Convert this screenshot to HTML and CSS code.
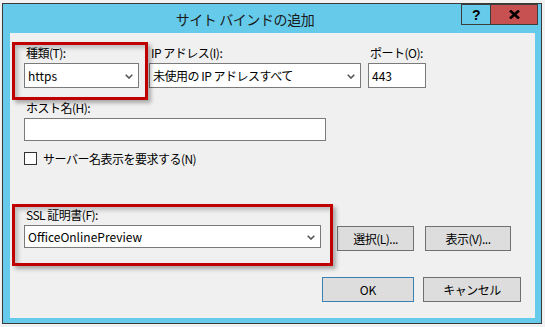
FILE: index.html
```html
<!DOCTYPE html>
<html lang="ja">
<head>
  <meta charset="UTF-8">
  <title>サイト バインドの追加</title>
  <link rel="stylesheet" href="styles.css">
</head>
<body>

  <div class="window">
    <div class="titlebar">
      <div class="title">サイト バインドの追加</div>
      <div class="caption-buttons">
        <div class="cap help">?</div>
        <div class="cap close">
          <svg width="11" height="9" viewBox="0 0 11 9"><path d="M1 0.5 L10 8.5 M10 0.5 L1 8.5" stroke="#000" stroke-width="2.6" fill="none"/></svg>
        </div>
      </div>
    </div>

    <div class="client">
      <!-- binding row -->
      <div class="row binding">
        <div class="field f-type">
          <div class="label">種類(T):</div>
          <div class="combo"><span class="latin">https</span><svg class="chev" width="8" height="5" viewBox="0 0 8 5"><polyline points="0.7,0.7 4,4 7.3,0.7" stroke="#555" stroke-width="1.6" fill="none"/></svg></div>
        </div>
        <div class="field f-ip">
          <div class="label">IP アドレス(I):</div>
          <div class="combo"><span>未使用の IP アドレスすべて</span><svg class="chev" width="8" height="5" viewBox="0 0 8 5"><polyline points="0.7,0.7 4,4 7.3,0.7" stroke="#555" stroke-width="1.6" fill="none"/></svg></div>
        </div>
        <div class="field f-port">
          <div class="label">ポート(O):</div>
          <div class="textbox latin">443</div>
        </div>
      </div>

      <!-- host name -->
      <div class="host">
        <div class="label">ホスト名(H):</div>
        <div class="textbox host-box"></div>
      </div>

      <div class="check-row">
        <span class="checkbox"></span>
        <span>サーバー名表示を要求する(N)</span>
      </div>

      <!-- certificate -->
      <div class="ssl">
        <div class="label">SSL 証明書(F):</div>
        <div class="ssl-row">
          <div class="combo cert"><span class="latin">OfficeOnlinePreview</span><svg class="chev" width="8" height="5" viewBox="0 0 8 5"><polyline points="0.7,0.7 4,4 7.3,0.7" stroke="#555" stroke-width="1.6" fill="none"/></svg></div>
          <div class="btn btn-select">選択(L)...</div>
          <div class="btn btn-view">表示(V)...</div>
        </div>
      </div>

      <div class="dialog-buttons">
        <div class="btn btn-ok latin">OK</div>
        <div class="btn btn-cancel">キャンセル</div>
      </div>

      <!-- red callouts drawn over the dialog -->
      <div class="callout callout-type"></div>
      <div class="callout callout-ssl"></div>
    </div>
  </div>

</body>
</html>
```

FILE: styles.css
```css
* {
  box-sizing: border-box;
}

body {
  margin: 0;
  background-color: #f2f2f2;
  font-family: "Noto Sans CJK JP", "Noto Sans", sans-serif;
  font-size: 12px;
  letter-spacing: -0.5px;
  color: #000;
}

.latin {
  letter-spacing: 0;
}

/* Window frame */
.window {
  margin: 3px 0 0 2px;
  width: 540px;
  height: 321px;
  border: 1px solid #3a3a3a;
  background-color: #66cbea;
  padding: 0 6px 5px 7px;
  display: flex;
  flex-direction: column;
}

.titlebar {
  height: 29px;
  display: flex;
  margin-left: -7px;
  margin-right: -6px;
}

.title {
  flex: 1;
  text-align: center;
  padding-left: 26px;
  padding-top: 5px;
  font-size: 14px;
  letter-spacing: -0.4px;
  color: #1a1a1a;
}

.caption-buttons {
  display: flex;
  margin-right: 3px;
}

.cap {
  height: 21px;
  border: 1px solid #3c3c3c;
  display: flex;
  align-items: center;
  justify-content: center;
}

.cap.help {
  width: 29px;
  border-right: none;
  font-family: "Liberation Sans", sans-serif;
  font-weight: bold;
  font-size: 14px;
}

.cap.close {
  width: 48px;
  background-color: #c75050;
}

/* Client area */
.client {
  position: relative;
  flex: 1;
  background-color: #f0f0f0;
  padding: 12px 0 0 14px;
}

.label {
  height: 16px;
  line-height: 16px;
  padding-left: 2px;
  margin-bottom: 2px;
}

.row {
  display: flex;
}

.f-type {
  width: 115px;
  margin-right: 10px;
}

.f-ip {
  width: 212px;
  margin-right: 7px;
}

.f-port {
  width: 58px;
}

.combo, .textbox {
  height: 25px;
  background-color: #fff;
  border: 1px solid #7a7a7a;
  display: flex;
  align-items: center;
  padding: 0 5px 0 3px;
}

.combo {
  justify-content: space-between;
}

.chev {
  flex-shrink: 0;
  margin-top: 1px;
}

.host {
  margin-top: 12px;
}

.host-box {
  width: 302px;
  height: 23px;
}

.check-row {
  margin-top: 9px;
  height: 17px;
  display: flex;
  align-items: center;
}

.checkbox {
  width: 13px;
  height: 13px;
  border: 1px solid #333;
  background-color: #fff;
  margin-right: 6px;
}

.ssl {
  margin-top: 40px;
}

.ssl-row {
  display: flex;
  align-items: flex-start;
}

.combo.cert {
  width: 297px;
  height: 23px;
}

.btn {
  height: 25px;
  background-color: #dddddd;
  border: 1px solid #707070;
  display: flex;
  align-items: center;
  justify-content: center;
}

.btn-select {
  width: 77px;
  margin: 1px 0 0 16px;
}

.btn-view {
  width: 86px;
  margin: 1px 0 0 11px;
}

.dialog-buttons {
  margin-top: 26px;
  padding-right: 14px;
  display: flex;
  justify-content: flex-end;
  gap: 9px;
}

.btn-ok {
  width: 92px;
  border-color: #3c7fb1;
}

.btn-cancel {
  width: 98px;
}

/* annotation boxes */
.callout {
  position: absolute;
  border: 3px solid #c00000;
  box-shadow: 3px 3px 4px rgba(0, 0, 0, 0.3), inset 3px 3px 4px rgba(0, 0, 0, 0.22);
  pointer-events: none;
}

.callout-type {
  left: 2px;
  top: 9px;
  width: 136px;
  height: 58px;
}

.callout-ssl {
  left: 2px;
  top: 171px;
  width: 321px;
  height: 62px;
}
```
